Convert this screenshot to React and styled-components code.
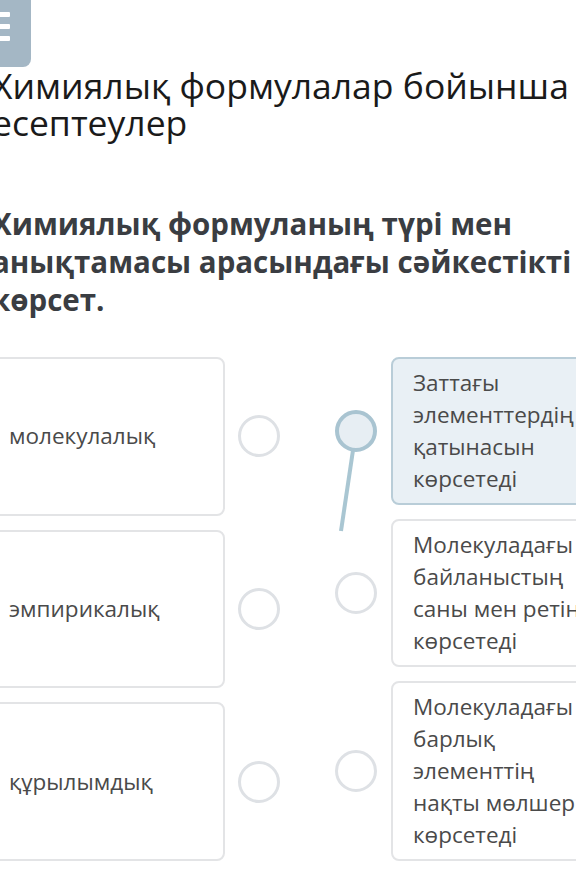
import styled, { createGlobalStyle } from 'styled-components';

const GlobalStyle = createGlobalStyle`
  html, body {
    margin: 0;
    padding: 0;
    background: #ffffff;
    overflow: hidden;
  }
  body {
    font-family: "Open Sans", "Liberation Sans", sans-serif;
    width: 576px;
    height: 894px;
  }
`;

const pairsLeft = ['молекулалық', 'эмпирикалық', 'құрылымдық'];

const pairsRight = [
  { text: 'Заттағы элементтердің қатынасын көрсетеді', selected: true },
  { text: 'Молекуладағы байланыстың саны мен ретін көрсетеді' },
  { text: 'Молекуладағы барлық элементтің нақты мөлшерін көрсетеді' },
];

const App = () => {
  return (
    <>
      <GlobalStyle />
      <Page>
        <MenuButton aria-label="menu">
          <Bar />
          <Bar />
          <Bar />
        </MenuButton>

        <Title>Химиялық формулалар бойынша есептеулер</Title>

        <Question>Химиялық формуланың түрі мен анықтамасы арасындағы сәйкестікті көрсет.</Question>

        <Board>
          <Column>
            {pairsLeft.map((label) => (
              <LeftRow key={label}>
                <TermCard>{label}</TermCard>
                <Dot />
              </LeftRow>
            ))}
          </Column>

          <Column>
            {pairsRight.map((item) => (
              <RightRow key={item.text}>
                <Dot $active={item.selected} />
                <DefCard $active={item.selected}>{item.text}</DefCard>
              </RightRow>
            ))}
          </Column>

          {/* dragged connector */}
          <Connector width="400" height="200">
            <line x1="368" y1="73" x2="353" y2="174" stroke="#a9c6d2" strokeWidth="4" />
          </Connector>
        </Board>
      </Page>
    </>
  );
};

const Page = styled.div`
  width: 660px;
  margin-left: -8px;
  display: flex;
  flex-direction: column;
  align-items: flex-start;
`;

const MenuButton = styled.div`
  width: 61px;
  height: 81px;
  margin-top: -14px;
  margin-left: -22px;
  border-radius: 8px;
  background: #a4b7c5;
  display: flex;
  flex-direction: column;
  align-items: center;
  justify-content: center;
  gap: 7px;
`;

const Bar = styled.span`
  display: block;
  width: 18px;
  height: 5px;
  border-radius: 1px;
  background: #ffffff;
`;

const Title = styled.h1`
  margin: 0;
  width: 636px;
  font-size: 35.5px;
  line-height: 37px;
  font-weight: 400;
  color: #1a1a1a;
`;

const Question = styled.h2`
  margin: 64px 0 0;
  width: 636px;
  font-size: 29.5px;
  line-height: 38px;
  font-weight: 700;
  color: #3a3d42;
`;

const Board = styled.div`
  position: relative;
  margin-top: 38px;
  margin-left: -4px;
  display: flex;
  gap: 55px;
`;

const Column = styled.div`
  display: flex;
  flex-direction: column;
  gap: 14px;
`;

const LeftRow = styled.div`
  flex: 1;
  display: flex;
  align-items: center;
  gap: 13px;
`;

const RightRow = styled.div`
  display: flex;
  align-items: center;
  gap: 14px;
`;

const TermCard = styled.div`
  align-self: stretch;
  box-sizing: border-box;
  width: 237px;
  padding: 8px 20px 8px 19px;
  border: 2px solid #e3e4e6;
  border-radius: 8px;
  background: #ffffff;
  display: flex;
  align-items: center;
  font-size: 22.5px;
  line-height: 32px;
  color: #4a4a4a;
`;

const DefCard = styled.div`
  box-sizing: border-box;
  width: 231px;
  padding: 8px 20px;
  border: 2px solid ${(p) => (p.$active ? '#b9cdd8' : '#e3e4e6')};
  border-radius: 8px;
  background: ${(p) => (p.$active ? '#e9f0f5' : '#ffffff')};
  font-size: 22.5px;
  line-height: 32px;
  color: #4a4a4a;
`;

const Dot = styled.span`
  position: relative;
  z-index: 2;
  flex: none;
  box-sizing: border-box;
  width: 42px;
  height: 42px;
  border-radius: 50%;
  border: ${(p) => (p.$active ? '4px solid #a9c4d1' : '3px solid #dee1e5')};
  background: ${(p) => (p.$active ? '#e7eef3' : '#ffffff')};
`;

const Connector = styled.svg`
  position: absolute;
  left: 0;
  top: 0;
  z-index: 1;
  pointer-events: none;
`;

export default App;
